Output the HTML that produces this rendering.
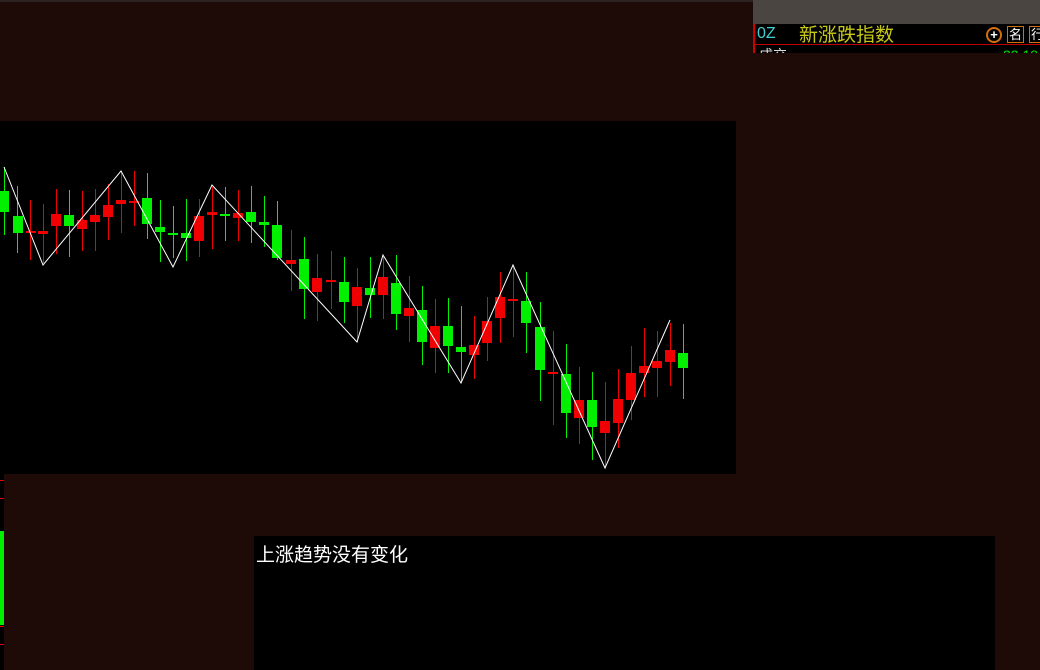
<!DOCTYPE html>
<html><head><meta charset="utf-8"><style>
html,body{margin:0;padding:0;width:1040px;height:670px;overflow:hidden;background:#1e0a07;font-family:"Liberation Sans","Noto Sans CJK SC",sans-serif}
.abs{position:absolute}
</style></head><body>
<div class="abs" style="left:0;top:0;width:1040px;height:2px;background:#2c2220"></div>
<div class="abs" style="left:753px;top:0;width:287px;height:24px;background:#4b4541"></div>
<div class="abs" style="left:753px;top:24px;width:287px;height:21px;background:#000;border-left:2px solid #d00000;box-sizing:border-box;border-bottom:1px solid #c00000"></div>
<div class="abs" style="left:757px;top:25px;color:#40d0d0;font-size:16px;line-height:18px">0Z</div>
<div class="abs" style="left:799px;top:23px;color:#c8c81a;font-size:19px;line-height:22px;font-family:'Noto Sans CJK SC',sans-serif">新涨跌指数</div>
<div class="abs" style="left:986px;top:27px;width:12px;height:12px;border:2px solid #d07010;border-radius:50%;color:#fff;font-size:13px;line-height:12px;text-align:center;font-weight:bold">+</div>
<div class="abs" style="left:1007px;top:26px;width:15px;height:15px;border:1px solid #d07010;color:#fff;font-size:13px;line-height:15px;text-align:center">名</div>
<div class="abs" style="left:1029px;top:26px;width:15px;height:15px;border:1px solid #d07010;color:#fff;font-size:13px;line-height:15px;text-align:center">行</div>
<div class="abs" style="left:753px;top:45px;width:287px;height:8px;background:#000;overflow:hidden;border-left:2px solid #d00000;box-sizing:border-box">
<span class="abs" style="left:4px;top:3px;color:#ddd;font-size:14px;line-height:14px">成交</span>
<span class="abs" style="left:248px;top:3px;color:#00e000;font-size:14px;line-height:14px">23.18</span></div>
<div class="abs" style="left:0;top:121px;width:736px;height:353px;background:#000"></div>
<div class="abs" style="left:0;top:474px;width:4px;height:196px;background:#000"></div>
<div class="abs" style="left:0;top:531px;width:4px;height:94px;background:#00f000"></div>
<div class="abs" style="left:0;top:480px;width:4px;height:1px;background:#e00"></div>
<div class="abs" style="left:0;top:498px;width:4px;height:1px;background:#e00"></div>
<div class="abs" style="left:0;top:626px;width:4px;height:1px;background:#e00"></div>
<div class="abs" style="left:0;top:644px;width:4px;height:1px;background:#e00"></div>
<div class="abs" style="left:254px;top:536px;width:741px;height:134px;background:#000"></div>
<div class="abs" style="left:256px;top:542px;color:#fff;font-size:19px;line-height:24px;font-family:'Noto Sans CJK SC',sans-serif">上涨趋势没有变化</div>
<svg class="abs" style="left:0;top:0" width="740" height="480" shape-rendering="crispEdges">
<g stroke-width="1">
<line x1="4.5" y1="167" x2="4.5" y2="235" stroke="#00f000"/><rect x="0" y="191" width="9" height="21" fill="#00f000"/>
<line x1="17.5" y1="186" x2="17.5" y2="253" stroke="#00f000"/><rect x="13" y="216" width="10" height="17" fill="#00f000"/>
<line x1="30.5" y1="200" x2="30.5" y2="260" stroke="#f00000"/><rect x="26" y="231" width="10" height="2" fill="#f00000"/>
<line x1="43.5" y1="204" x2="43.5" y2="263" stroke="#f00000"/><rect x="38" y="231" width="10" height="3" fill="#f00000"/>
<line x1="56.5" y1="189" x2="56.5" y2="254" stroke="#f00000"/><rect x="51" y="214" width="10" height="12" fill="#f00000"/>
<line x1="69.5" y1="190" x2="69.5" y2="257" stroke="#00f000"/><rect x="64" y="215" width="10" height="11" fill="#00f000"/>
<line x1="82.5" y1="191" x2="82.5" y2="251" stroke="#f00000"/><rect x="77" y="220" width="10" height="9" fill="#f00000"/>
<line x1="95.5" y1="189" x2="95.5" y2="251" stroke="#f00000"/><rect x="90" y="215" width="10" height="7" fill="#f00000"/>
<line x1="108.5" y1="184" x2="108.5" y2="240" stroke="#f00000"/><rect x="103" y="205" width="10" height="12" fill="#f00000"/>
<line x1="121.5" y1="171" x2="121.5" y2="233" stroke="#f00000"/><rect x="116" y="200" width="10" height="4" fill="#f00000"/>
<line x1="134.5" y1="171" x2="134.5" y2="226" stroke="#f00000"/><rect x="129" y="201" width="10" height="2" fill="#f00000"/>
<line x1="147.5" y1="173" x2="147.5" y2="239" stroke="#00f000"/><rect x="142" y="198" width="10" height="26" fill="#00f000"/>
<line x1="160.5" y1="200" x2="160.5" y2="262" stroke="#00f000"/><rect x="155" y="227" width="10" height="5" fill="#00f000"/>
<line x1="173.5" y1="206" x2="173.5" y2="258" stroke="#00f000"/><rect x="168" y="233" width="10" height="2" fill="#00f000"/>
<line x1="186.5" y1="199" x2="186.5" y2="261" stroke="#00f000"/><rect x="181" y="233" width="10" height="5" fill="#00f000"/>
<line x1="199.5" y1="199" x2="199.5" y2="257" stroke="#f00000"/><rect x="194" y="216" width="10" height="25" fill="#f00000"/>
<line x1="212.5" y1="187" x2="212.5" y2="249" stroke="#f00000"/><rect x="207" y="212" width="10" height="3" fill="#f00000"/>
<line x1="225.5" y1="187" x2="225.5" y2="241" stroke="#00f000"/><rect x="220" y="214" width="10" height="2" fill="#00f000"/>
<line x1="238.5" y1="190" x2="238.5" y2="241" stroke="#f00000"/><rect x="233" y="213" width="10" height="5" fill="#f00000"/>
<line x1="251.5" y1="186" x2="251.5" y2="243" stroke="#00f000"/><rect x="246" y="212" width="10" height="10" fill="#00f000"/>
<line x1="264.5" y1="196" x2="264.5" y2="247" stroke="#00f000"/><rect x="259" y="222" width="10" height="3" fill="#00f000"/>
<line x1="277.5" y1="201" x2="277.5" y2="260" stroke="#00f000"/><rect x="272" y="225" width="10" height="33" fill="#00f000"/>
<line x1="291.5" y1="230" x2="291.5" y2="291" stroke="#f00000"/><rect x="286" y="260" width="10" height="4" fill="#f00000"/>
<line x1="304.5" y1="237" x2="304.5" y2="319" stroke="#00f000"/><rect x="299" y="259" width="10" height="30" fill="#00f000"/>
<line x1="317.5" y1="254" x2="317.5" y2="321" stroke="#f00000"/><rect x="312" y="278" width="10" height="14" fill="#f00000"/>
<line x1="331.5" y1="251" x2="331.5" y2="309" stroke="#f00000"/><rect x="326" y="280" width="10" height="2" fill="#f00000"/>
<line x1="344.5" y1="257" x2="344.5" y2="323" stroke="#00f000"/><rect x="339" y="282" width="10" height="20" fill="#00f000"/>
<line x1="357.5" y1="268" x2="357.5" y2="342" stroke="#f00000"/><rect x="352" y="287" width="10" height="19" fill="#f00000"/>
<line x1="370.5" y1="257" x2="370.5" y2="318" stroke="#00f000"/><rect x="365" y="288" width="10" height="7" fill="#00f000"/>
<line x1="383.5" y1="256" x2="383.5" y2="319" stroke="#f00000"/><rect x="378" y="277" width="10" height="18" fill="#f00000"/>
<line x1="396.5" y1="255" x2="396.5" y2="330" stroke="#00f000"/><rect x="391" y="283" width="10" height="31" fill="#00f000"/>
<line x1="409.5" y1="276" x2="409.5" y2="342" stroke="#f00000"/><rect x="404" y="308" width="10" height="8" fill="#f00000"/>
<line x1="422.5" y1="286" x2="422.5" y2="365" stroke="#00f000"/><rect x="417" y="310" width="10" height="32" fill="#00f000"/>
<line x1="435.5" y1="299" x2="435.5" y2="373" stroke="#f00000"/><rect x="430" y="326" width="10" height="22" fill="#f00000"/>
<line x1="448.5" y1="298" x2="448.5" y2="373" stroke="#00f000"/><rect x="443" y="326" width="10" height="20" fill="#00f000"/>
<line x1="461.5" y1="306" x2="461.5" y2="382" stroke="#00f000"/><rect x="456" y="347" width="10" height="5" fill="#00f000"/>
<line x1="474.5" y1="316" x2="474.5" y2="379" stroke="#f00000"/><rect x="469" y="345" width="10" height="10" fill="#f00000"/>
<line x1="487.5" y1="297" x2="487.5" y2="361" stroke="#f00000"/><rect x="482" y="321" width="10" height="22" fill="#f00000"/>
<line x1="500.5" y1="272" x2="500.5" y2="343" stroke="#f00000"/><rect x="495" y="297" width="10" height="21" fill="#f00000"/>
<line x1="513.5" y1="265" x2="513.5" y2="337" stroke="#f00000"/><rect x="508" y="299" width="10" height="2" fill="#f00000"/>
<line x1="526.5" y1="272" x2="526.5" y2="353" stroke="#00f000"/><rect x="521" y="301" width="10" height="22" fill="#00f000"/>
<line x1="540.5" y1="302" x2="540.5" y2="401" stroke="#00f000"/><rect x="535" y="327" width="10" height="43" fill="#00f000"/>
<line x1="553.5" y1="331" x2="553.5" y2="425" stroke="#f00000"/><rect x="548" y="372" width="10" height="2" fill="#f00000"/>
<line x1="566.5" y1="344" x2="566.5" y2="438" stroke="#00f000"/><rect x="561" y="374" width="10" height="39" fill="#00f000"/>
<line x1="579.5" y1="367" x2="579.5" y2="444" stroke="#f00000"/><rect x="574" y="400" width="10" height="18" fill="#f00000"/>
<line x1="592.5" y1="372" x2="592.5" y2="460" stroke="#00f000"/><rect x="587" y="400" width="10" height="27" fill="#00f000"/>
<line x1="605.5" y1="382" x2="605.5" y2="468" stroke="#f00000"/><rect x="600" y="421" width="10" height="12" fill="#f00000"/>
<line x1="618.5" y1="369" x2="618.5" y2="448" stroke="#f00000"/><rect x="613" y="399" width="10" height="24" fill="#f00000"/>
<line x1="631.5" y1="346" x2="631.5" y2="420" stroke="#f00000"/><rect x="626" y="373" width="10" height="27" fill="#f00000"/>
<line x1="644.5" y1="328" x2="644.5" y2="397" stroke="#f00000"/><rect x="639" y="366" width="10" height="7" fill="#f00000"/>
<line x1="657.5" y1="331" x2="657.5" y2="397" stroke="#f00000"/><rect x="652" y="361" width="10" height="7" fill="#f00000"/>
<line x1="670.5" y1="323" x2="670.5" y2="386" stroke="#f00000"/><rect x="665" y="350" width="10" height="12" fill="#f00000"/>
<line x1="683.5" y1="324" x2="683.5" y2="399" stroke="#00f000"/><rect x="678" y="353" width="10" height="15" fill="#00f000"/>
</g>
<polyline fill="none" stroke="#fff" stroke-width="1" shape-rendering="auto" points="4,167 43,265 121,171 173,267 212,185 357,342 383,255 461,383 513,265 605,468 670,320"/>
</svg>
</body></html>
